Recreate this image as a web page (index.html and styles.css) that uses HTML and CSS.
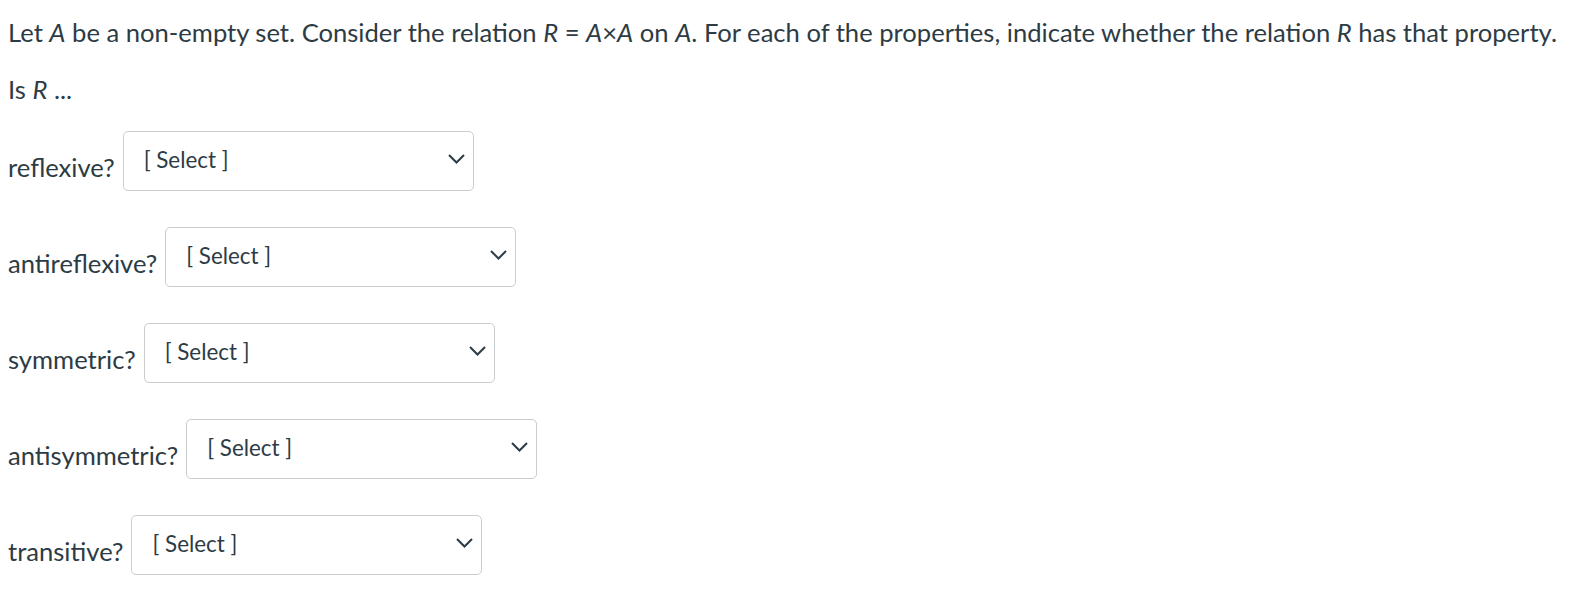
FILE: index.html
```html
<!DOCTYPE html>
<html>
<head>
<meta charset="utf-8">
<link rel="stylesheet" href="styles.css">
</head>
<body>
<div class="question">
  <p class="intro">Let <em>A</em> be a non-empty set. Consider the relation <em>R</em> = <em>A</em>×<em>A</em> on <em>A</em>. For each of the properties, indicate whether the relation <em>R</em> has that property.</p>
  <p class="lead">Is <em>R</em> ...</p>
  <div class="row"><span class="label">reflexive?</span><div class="select"><span class="value">[ Select ]</span><svg class="chev" width="17" height="10" viewBox="0 0 17 10"><polyline points="1,1 8.5,8.5 16,1" fill="none" stroke="#2d3b45" stroke-width="2"/></svg></div></div>
  <div class="row"><span class="label">antireflexive?</span><div class="select"><span class="value">[ Select ]</span><svg class="chev" width="17" height="10" viewBox="0 0 17 10"><polyline points="1,1 8.5,8.5 16,1" fill="none" stroke="#2d3b45" stroke-width="2"/></svg></div></div>
  <div class="row"><span class="label">symmetric?</span><div class="select"><span class="value">[ Select ]</span><svg class="chev" width="17" height="10" viewBox="0 0 17 10"><polyline points="1,1 8.5,8.5 16,1" fill="none" stroke="#2d3b45" stroke-width="2"/></svg></div></div>
  <div class="row"><span class="label">antisymmetric?</span><div class="select"><span class="value">[ Select ]</span><svg class="chev" width="17" height="10" viewBox="0 0 17 10"><polyline points="1,1 8.5,8.5 16,1" fill="none" stroke="#2d3b45" stroke-width="2"/></svg></div></div>
  <div class="row"><span class="label">transitive?</span><div class="select"><span class="value">[ Select ]</span><svg class="chev" width="17" height="10" viewBox="0 0 17 10"><polyline points="1,1 8.5,8.5 16,1" fill="none" stroke="#2d3b45" stroke-width="2"/></svg></div></div>
</div>
</body>
</html>
```
FILE: styles.css
```css
html, body {
  background: #ffffff;
}
body {
  margin: 8px;
}
.question {
  font-family: Lato, "Open Sans", sans-serif;
  font-size: 25.6px;
  line-height: 38.4px;
  color: #2d3b45;
}
.question em {
  font-style: italic;
}
.intro {
  margin: 5px 0 0 0;
}
.lead {
  margin: 18.6px 0 0 0;
}
.row {
  display: flex;
  align-items: flex-start;
  margin-top: 36px;
  height: 60px;
}
.lead + .row {
  margin-top: 22.4px;
}
.label {
  margin-top: 17.5px;
  margin-right: 8px;
  white-space: nowrap;
}
.select {
  box-sizing: border-box;
  width: 351px;
  height: 60px;
  border: 1px solid #c7cdd1;
  border-radius: 5px;
  display: flex;
  align-items: flex-start;
  justify-content: space-between;
  padding: 0 8px 0 20px;
  background: #ffffff;
}
.value {
  font-size: 22.4px;
  line-height: 30px;
  margin-top: 13.6px;
  white-space: nowrap;
}
.chev {
  margin-top: 22.6px;
  display: block;
}
```
